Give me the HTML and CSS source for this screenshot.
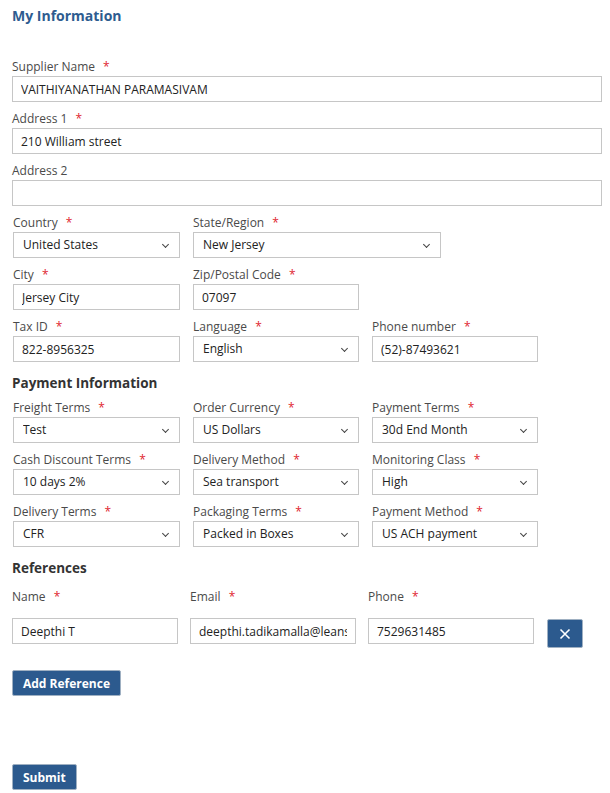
FILE: index.html
```html
<!DOCTYPE html>
<html lang="en">
<head>
  <meta charset="UTF-8" />
  <title>My Information</title>
  <link rel="stylesheet" href="styles.css">
</head>
<body>
  <div class="page">
    <h1 class="title">My Information</h1>

    <div class="field">
      <label>Supplier Name <span class="req">*</span></label>
      <input type="text" class="full" value="VAITHIYANATHAN PARAMASIVAM">
    </div>
    <div class="field">
      <label>Address 1 <span class="req">*</span></label>
      <input type="text" class="full" value="210 William street">
    </div>
    <div class="field">
      <label>Address 2</label>
      <input type="text" class="full" value="">
    </div>

    <div class="row">
      <div class="field col">
        <label>Country <span class="req">*</span></label>
        <div class="select-wrap"><select><option>United States</option></select></div>
      </div>
      <div class="field col wide">
        <label>State/Region <span class="req">*</span></label>
        <div class="select-wrap"><select><option>New Jersey</option></select></div>
      </div>
    </div>

    <div class="row">
      <div class="field col">
        <label>City <span class="req">*</span></label>
        <input type="text" value="Jersey City">
      </div>
      <div class="field col">
        <label>Zip/Postal Code <span class="req">*</span></label>
        <input type="text" value="07097">
      </div>
    </div>

    <div class="row">
      <div class="field col">
        <label>Tax ID <span class="req">*</span></label>
        <input type="text" value="822-8956325">
      </div>
      <div class="field col">
        <label>Language <span class="req">*</span></label>
        <div class="select-wrap"><select><option>English</option></select></div>
      </div>
      <div class="field col">
        <label>Phone number <span class="req">*</span></label>
        <input type="text" value="(52)-87493621">
      </div>
    </div>

    <h2 class="section">Payment Information</h2>

    <div class="row">
      <div class="field col">
        <label>Freight Terms <span class="req">*</span></label>
        <div class="select-wrap"><select><option>Test</option></select></div>
      </div>
      <div class="field col">
        <label>Order Currency <span class="req">*</span></label>
        <div class="select-wrap"><select><option>US Dollars</option></select></div>
      </div>
      <div class="field col">
        <label>Payment Terms <span class="req">*</span></label>
        <div class="select-wrap"><select><option>30d End Month</option></select></div>
      </div>
    </div>

    <div class="row">
      <div class="field col">
        <label>Cash Discount Terms <span class="req">*</span></label>
        <div class="select-wrap"><select><option>10 days 2%</option></select></div>
      </div>
      <div class="field col">
        <label>Delivery Method <span class="req">*</span></label>
        <div class="select-wrap"><select><option>Sea transport</option></select></div>
      </div>
      <div class="field col">
        <label>Monitoring Class <span class="req">*</span></label>
        <div class="select-wrap"><select><option>High</option></select></div>
      </div>
    </div>

    <div class="row">
      <div class="field col">
        <label>Delivery Terms <span class="req">*</span></label>
        <div class="select-wrap"><select><option>CFR</option></select></div>
      </div>
      <div class="field col">
        <label>Packaging Terms <span class="req">*</span></label>
        <div class="select-wrap"><select><option>Packed in Boxes</option></select></div>
      </div>
      <div class="field col">
        <label>Payment Method <span class="req">*</span></label>
        <div class="select-wrap"><select><option>US ACH payment</option></select></div>
      </div>
    </div>

    <h2 class="section refs-title">References</h2>

    <div class="ref-row">
      <div class="ref-field">
        <label>Name <span class="req">*</span></label>
        <input type="text" value="Deepthi T">
      </div>
      <div class="ref-field">
        <label>Email <span class="req">*</span></label>
        <input type="text" value="deepthi.tadikamalla@leanswift.com">
      </div>
      <div class="ref-field">
        <label>Phone <span class="req">*</span></label>
        <input type="text" value="7529631485">
      </div>
      <button class="btn remove" title="Remove">
        <svg width="12" height="12" viewBox="0 0 12 12"><path d="M1.5 1.5 L10.5 10.5 M10.5 1.5 L1.5 10.5" stroke="#fff" stroke-width="1.6" fill="none"/></svg>
      </button>
    </div>

    <button class="btn add">Add Reference</button>

    <div class="actions">
      <button class="btn">Submit</button>
    </div>
  </div>
</body>
</html>
```

FILE: styles.css
```css
* {
  margin: 0;
  padding: 0;
  box-sizing: border-box;
}

body {
  font-family: 'Open Sans', 'Noto Sans', Arial, sans-serif;
  font-size: 12px;
  color: #333;
  background: #fff;
}

.page {
  padding: 6px 8px 0 12px;
}

.title {
  font-size: 14px;
  font-weight: 700;
  line-height: 20px;
  color: #2e5c8f;
  margin-bottom: 33px;
}

.field {
  margin-bottom: 9px;
}

.field label,
.ref-field label {
  display: block;
  line-height: 16px;
  margin-bottom: 1px;
  color: #4a4a4a;
}

.req {
  color: #e0242f;
  margin-left: 5px;
}

input,
select {
  font-family: inherit;
  font-size: 12px;
  color: #222;
  height: 26px;
  width: 100%;
  border: 1px solid #c6c6c6;
  background: #fff;
  padding: 0 8px;
  outline: none;
  border-radius: 0;
}

.full {
  width: 590px;
}

.row {
  display: flex;
  gap: 13px;
  padding-left: 1px;
}

.col {
  width: 166px;
}

.row .col:first-child {
  width: 167px;
}

.col.wide {
  width: 248px;
}

.select-wrap {
  position: relative;
}

.select-wrap select {
  -webkit-appearance: none;
  appearance: none;
  padding: 0 24px 1px 9px;
}

.select-wrap::after {
  content: "";
  position: absolute;
  right: 12px;
  top: 10px;
  width: 4px;
  height: 4px;
  border-right: 1px solid #444;
  border-bottom: 1px solid #444;
  transform: rotate(45deg);
  pointer-events: none;
}

.section {
  font-size: 13.5px;
  font-weight: 700;
  line-height: 18px;
  color: #333;
  margin-top: 3px;
  margin-bottom: 8px;
}

.refs-title {
  margin-bottom: 12px;
}

.ref-row {
  display: flex;
  align-items: flex-end;
  gap: 12px;
}

.ref-field {
  width: 166px;
}

.ref-field label {
  margin-bottom: 13px;
}

.btn {
  font-family: inherit;
  font-size: 12px;
  font-weight: 700;
  color: #fff;
  background: #2c5a8e;
  border: 1px solid #9fb0c2;
  border-radius: 2px;
  height: 26px;
  padding: 0 10px;
  cursor: pointer;
}

.btn.remove {
  width: 36px;
  height: 29px;
  padding: 0;
  margin-left: 1px;
  margin-bottom: -4px;
  display: flex;
  align-items: center;
  justify-content: center;
}

.btn.add {
  margin-top: 26px;
}

.actions {
  margin-top: 68px;
}
```
